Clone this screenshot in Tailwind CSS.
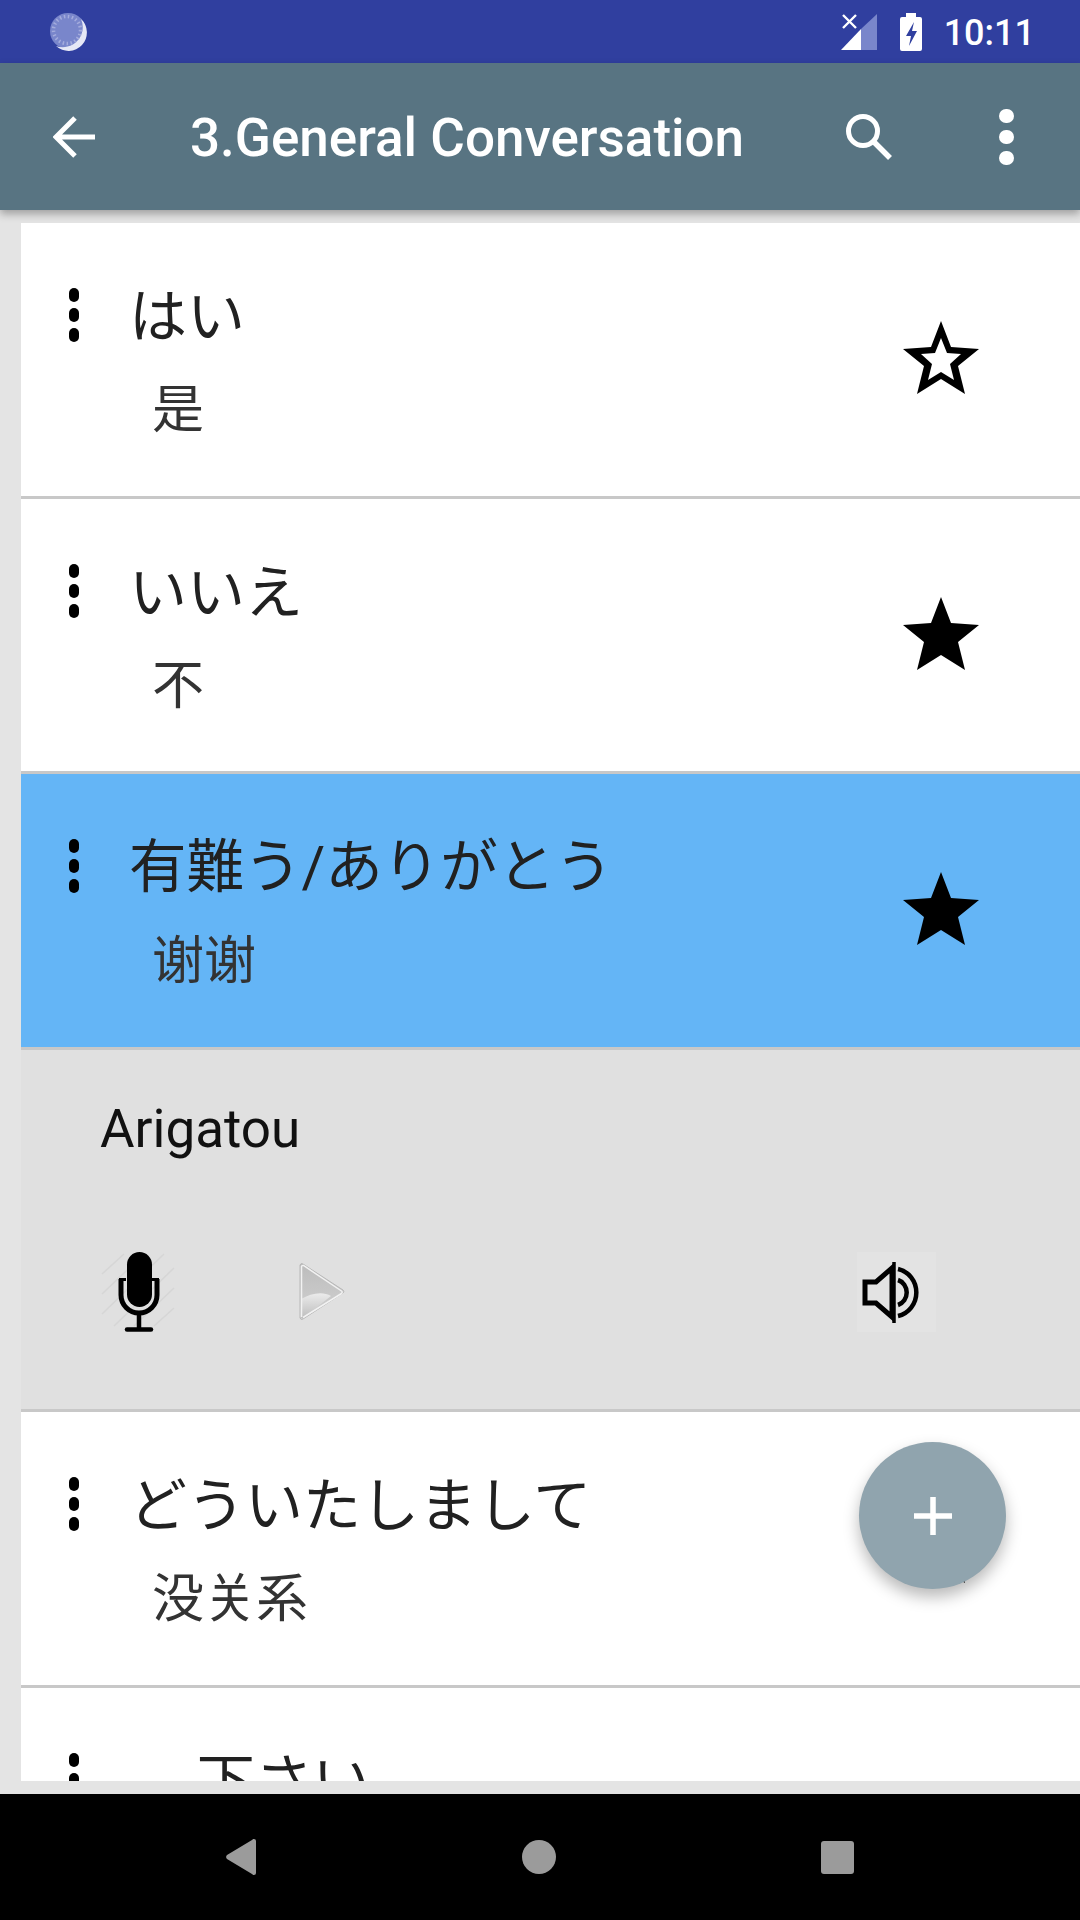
<!DOCTYPE html>
<html lang="ja">
<head>
    <meta charset="UTF-8">
    <meta name="viewport" content="width=device-width, initial-scale=1.0">
    <title>3.General Conversation</title>
    <script src="https://cdn.jsdelivr.net/npm/@tailwindcss/browser@4"></script>
</head>
<body class="bg-[#e4e4e4]">
<div class="relative w-[1080px] h-[1920px] overflow-hidden flex flex-col font-['Roboto','Noto_Sans_CJK_JP',sans-serif]">

    <!-- status bar -->
    <div class="h-[63px] shrink-0 bg-[#303f9f] flex items-center pl-[49px] pr-[45px]">
        <svg class="w-[38px] h-[38px]" viewBox="0 0 38 38">
            <circle cx="19" cy="18" r="18" fill="#7986cb"/>
            <path d="M32 6a18 18 0 0 1-25 27a20 20 0 0 0 25-27z" fill="#e6e8f6"/>
            <circle cx="18" cy="17" r="13.500" fill="none" stroke="#a4acdd" stroke-width="3.500" stroke-dasharray="1.500 2.500"/>
        </svg>
        <div class="flex-1"></div>
        <svg class="w-[36px] h-[36px] mr-[23px]" viewBox="0 0 36 36">
            <path d="M36 0v36H20V15z" fill="#7986cb"/>
            <path d="M20 15v21H0z" fill="#fff"/>
            <path d="M2 1l13 13M15 1L2 14" stroke="#fff" stroke-width="2.400" fill="none"/>
        </svg>
        <svg class="w-[22px] h-[38px] mr-[22px]" viewBox="0 0 22 38">
            <path d="M6 0h10v4h4a2 2 0 0 1 2 2v30a2 2 0 0 1-2 2H2a2 2 0 0 1-2-2V6a2 2 0 0 1 2-2h4z" fill="#fff"/>
            <path d="M14 9L6 23h5l-2 10 8-15h-5z" fill="#303f9f"/>
        </svg>
        <span class="pt-[2px] text-[36px] leading-none font-medium text-white">10:11</span>
    </div>

    <!-- app bar -->
    <div class="relative z-10 h-[147px] shrink-0 bg-[#587482] shadow-[0_4px_8px_rgba(0,0,0,0.3)] flex items-center">
        <svg class="ml-[53px] w-[42px] h-[42px]" viewBox="0 0 42 42">
            <path d="M42 21H4M22 2L3 21l19 19" stroke="#fff" stroke-width="5" fill="none"/>
        </svg>
        <h1 class="ml-[95px] pt-[4px] text-[53px] leading-none font-medium text-white">3.General Conversation</h1>
        <div class="flex-1"></div>
        <svg class="w-[46px] h-[46px] mr-[107px]" viewBox="0 0 46 46">
            <circle cx="17" cy="17" r="14.500" fill="none" stroke="#fff" stroke-width="5"/>
            <path d="M27 27l17 17" stroke="#fff" stroke-width="5.500" fill="none"/>
        </svg>
        <div class="flex flex-col gap-[7px] mr-[66px]">
            <div class="w-[15px] h-[14px] rounded-full bg-white"></div>
            <div class="w-[15px] h-[14px] rounded-full bg-white"></div>
            <div class="w-[15px] h-[14px] rounded-full bg-white"></div>
        </div>
    </div>

    <!-- list -->
    <div class="flex-1 pl-[21px] pt-[13px] pb-[13px] min-h-0">
        <div class="h-full overflow-hidden bg-white">

            <div class="h-[276px] bg-white border-b-[3px] border-[#c8c8c8] flex">
                <div class="w-[108px] pl-[48px] pt-[65px] shrink-0">
                    <div class="flex flex-col gap-[6px]">
                        <div class="w-[10px] h-[14px] rounded-full bg-black"></div>
                        <div class="w-[10px] h-[14px] rounded-full bg-black"></div>
                        <div class="w-[10px] h-[14px] rounded-full bg-black"></div>
                    </div>
                </div>
                <div class="flex-1">
                    <div class="mt-[56px] text-[58px] leading-[76px] text-[#212121]">はい</div>
                    <div class="mt-[26px] ml-[23px] text-[52px] leading-[60px] text-[#333333]">是</div>
                </div>
                <svg class="w-[78px] h-[74px] mt-[98px] mr-[100px]" viewBox="0 0 78 74">
                    <path fill-rule="evenodd" d="M39 0l10 26 28 2-21 17 7 28-24-15-24 15 7-28L1 28l28-2zM39 17l-6 15-14 1 11 10-4 16 13-8 13 8-4-16 11-10-14-1z" fill="#000"/>
                </svg>
            </div>

            <div class="h-[275px] bg-white border-b-[3px] border-[#c8c8c8] flex">
                <div class="w-[108px] pl-[48px] pt-[65px] shrink-0">
                    <div class="flex flex-col gap-[6px]">
                        <div class="w-[10px] h-[14px] rounded-full bg-black"></div>
                        <div class="w-[10px] h-[14px] rounded-full bg-black"></div>
                        <div class="w-[10px] h-[14px] rounded-full bg-black"></div>
                    </div>
                </div>
                <div class="flex-1">
                    <div class="mt-[56px] text-[58px] leading-[76px] text-[#212121]">いいえ</div>
                    <div class="mt-[26px] ml-[23px] text-[52px] leading-[60px] text-[#333333]">不</div>
                </div>
                <svg class="w-[78px] h-[74px] mt-[98px] mr-[100px]" viewBox="0 0 78 74">
                    <path d="M39 0l10 26 28 2-21 17 7 28-24-15-24 15 7-28L1 28l28-2z" fill="#000"/>
                </svg>
            </div>

            <div class="h-[276px] bg-[#64b5f6] border-b-[3px] border-[#c8c8c8] flex">
                <div class="w-[108px] pl-[48px] pt-[65px] shrink-0">
                    <div class="flex flex-col gap-[6px]">
                        <div class="w-[10px] h-[14px] rounded-full bg-black"></div>
                        <div class="w-[10px] h-[14px] rounded-full bg-black"></div>
                        <div class="w-[10px] h-[14px] rounded-full bg-black"></div>
                    </div>
                </div>
                <div class="flex-1">
                    <div class="mt-[56px] text-[57.500px] leading-[76px] text-[#212121]">有難う/ありがとう</div>
                    <div class="mt-[26px] ml-[23px] text-[52px] leading-[60px] text-[#333333]">谢谢</div>
                </div>
                <svg class="w-[78px] h-[74px] mt-[98px] mr-[100px]" viewBox="0 0 78 74">
                    <path d="M39 0l10 26 28 2-21 17 7 28-24-15-24 15 7-28L1 28l28-2z" fill="#000"/>
                </svg>
            </div>

            <!-- expanded row -->
            <div class="h-[362px] bg-[#e0e0e0] border-b-[3px] border-[#c8c8c8] pl-[79px] pt-[49px]">
                <div class="text-[53px] leading-[60px] text-[#111111]">Arigatou</div>
                <div class="flex items-center mt-[93px] h-[80px]">
                    <svg class="w-[76px] h-[80px]" viewBox="0 0 76 80">
                        <path d="M2 22L24 2M2 42L44 2M2 62L64 2M14 74L74 16M34 74L74 36M54 74L74 56" stroke="#d6d6d6" stroke-width="1.500" fill="none"/>
                        <rect x="27" y="0" width="25" height="55" rx="12.500" fill="#000"/>
                        <path d="M21 27v16a18 18 0 0 0 36 0V27" fill="none" stroke="#000" stroke-width="5"/>
                        <path d="M19 27.500h7M52 27.500h7" stroke="#000" stroke-width="3"/>
                        <path d="M39 62v14" stroke="#000" stroke-width="4.500"/>
                        <path d="M27 77.500h24" stroke="#000" stroke-width="4.500" stroke-linecap="round"/>
                    </svg>
                    <svg class="ml-[121px] w-[48px] h-[60px]" viewBox="0 0 48 60">
                        <defs>
                            <linearGradient id="playFill" x1="0" y1="0" x2="0" y2="1">
                                <stop offset="0" stop-color="#bcbcbc"/>
                                <stop offset="1" stop-color="#d2d2d2"/>
                            </linearGradient>
                            <linearGradient id="playLow" x1="0" y1="0" x2="0" y2="1">
                                <stop offset="0" stop-color="#ececec"/>
                                <stop offset="1" stop-color="#bdbdbd"/>
                            </linearGradient>
                        </defs>
                        <path d="M3 3a2 2 0 0 1 3-1l40 26a2 2 0 0 1 0 3L6 57a2 2 0 0 1-3-1z" fill="url(#playFill)" stroke="#b8b8b8" stroke-width="1"/>
                        <path d="M4 37c10-6 22-8 30-3L6 56c-1 .5-2 0-2-1z" fill="url(#playLow)"/>
                        <path d="M4.500 55V4.500a1.500 1.500 0 0 1 2-1l38 25.500a1.500 1.500 0 0 1 0 2.500L6 55.500" fill="none" stroke="#f2f2f2" stroke-width="1.500"/>
                    </svg>
                    <div class="ml-[512px] w-[79px] h-[80px] bg-[#e3e3e3] flex items-center justify-center">
                        <svg class="w-[79px] h-[80px]" viewBox="0 0 79 80">
                            <path d="M8 30h11L35 16v49L19 51H8z" fill="none" stroke="#000" stroke-width="5"/>
                            <path d="M37 10v61" stroke="#000" stroke-width="3.500" fill="none"/>
                            <path d="M41 17a23 24 0 0 1 0 47M41 28a12 13 0 0 1 0 25" fill="none" stroke="#000" stroke-width="4.500"/>
                        </svg>
                    </div>
                </div>
            </div>

            <div class="h-[276px] bg-white border-b-[3px] border-[#c8c8c8] flex">
                <div class="w-[108px] pl-[48px] pt-[65px] shrink-0">
                    <div class="flex flex-col gap-[6px]">
                        <div class="w-[10px] h-[14px] rounded-full bg-black"></div>
                        <div class="w-[10px] h-[14px] rounded-full bg-black"></div>
                        <div class="w-[10px] h-[14px] rounded-full bg-black"></div>
                    </div>
                </div>
                <div class="flex-1">
                    <div class="mt-[56px] text-[58px] leading-[76px] text-[#212121]">どういたしまして</div>
                    <div class="mt-[26px] ml-[23px] text-[52px] leading-[60px] text-[#333333]">没关系</div>
                </div>
                <svg class="w-[78px] h-[74px] mt-[98px] mr-[100px]" viewBox="0 0 78 74">
                    <path d="M39 0l10 26 28 2-21 17 7 28-24-15-24 15 7-28L1 28l28-2z" fill="#000"/>
                </svg>
            </div>

            <div class="h-[275px] bg-white flex">
                <div class="w-[108px] pl-[48px] pt-[65px] shrink-0">
                    <div class="flex flex-col gap-[6px]">
                        <div class="w-[10px] h-[14px] rounded-full bg-black"></div>
                        <div class="w-[10px] h-[14px] rounded-full bg-black"></div>
                        <div class="w-[10px] h-[14px] rounded-full bg-black"></div>
                    </div>
                </div>
                <div class="flex-1">
                    <div class="mt-[56px] ml-[29px] text-[58px] leading-[76px] text-[#212121]">…下さい</div>
                </div>
            </div>
        </div>
    </div>

    <!-- nav bar -->
    <div class="h-[126px] shrink-0 bg-black flex items-center">
        <svg class="ml-[226px] w-[30px] h-[36px]" viewBox="0 0 30 36">
            <path d="M28 0a2 2 0 0 1 2 2v32a2 2 0 0 1-2 2c-1 0-1.500-.5-2-1L1 20a3 3 0 0 1 0-4L26 1c.5-.5 1-1 2-1z" fill="#9b9b9b"/>
        </svg>
        <div class="ml-[266px] w-[34px] h-[34px] rounded-full bg-[#9b9b9b]"></div>
        <div class="ml-[265px] w-[33px] h-[33px] rounded-[3px] bg-[#9b9b9b]"></div>
    </div>

    <!-- floating add button -->
    <div class="absolute left-[859px] top-[1442px] w-[147px] h-[147px] rounded-full bg-[#90a4ae] shadow-[0_8px_16px_rgba(0,0,0,0.28)] flex items-center justify-center">
        <svg class="w-[38px] h-[38px]" viewBox="0 0 38 38">
            <path d="M19 0v38M0 19h38" stroke="#fff" stroke-width="5.500" fill="none"/>
        </svg>
    </div>
</div>
</body>
</html>
